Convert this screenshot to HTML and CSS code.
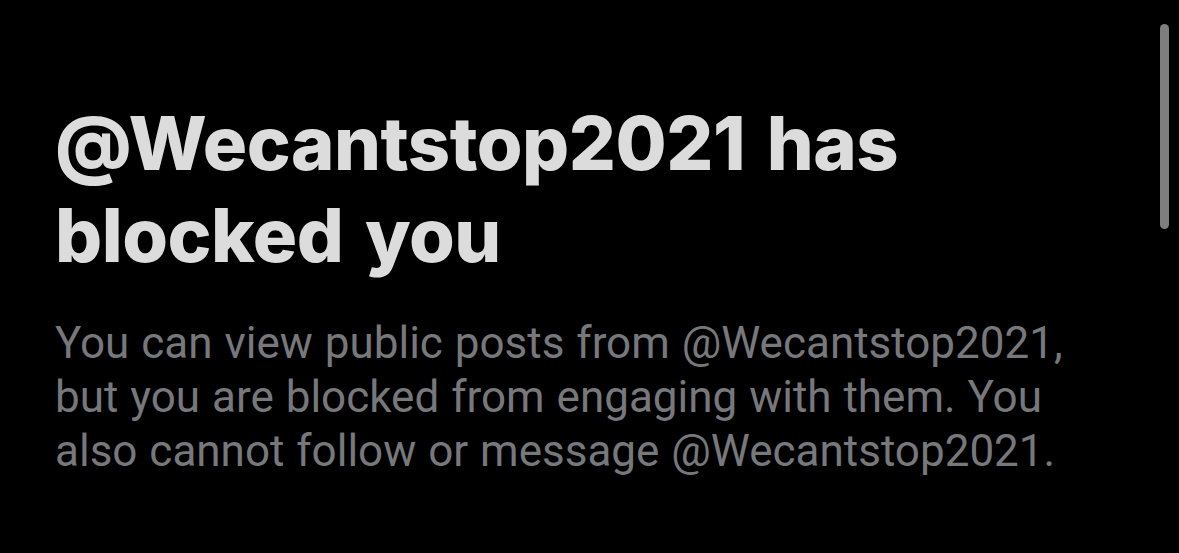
FILE: index.html
```html
<!DOCTYPE html>
<html>
<head>
<meta charset="utf-8">
<link rel="stylesheet" href="styles.css">
</head>
<body>
<div class="page">
  <main class="content">
    <h1 class="title">@Wecantstop2021 has blocked you</h1>
    <p class="desc">You can view public posts from @Wecantstop2021, but you are blocked from engaging with them. You also cannot follow or message @Wecantstop2021.</p>
  </main>
  <div class="scrollbar"></div>
</div>
</body>
</html>
```
FILE: styles.css
```css
html, body {
  margin: 0;
  padding: 0;
  background: #000;
}
.page {
  width: 1179px;
  height: 553px;
  overflow: hidden;
  position: relative;
  background: #000;
}
.content {
  padding: 97px 0 0 55px;
  width: 1020px;
}
.title {
  margin: 0;
  font-family: "Inter", "Liberation Sans", sans-serif;
  font-weight: 800;
  font-size: 74px;
  line-height: 92px;
  color: #dcdcdc;
  letter-spacing: -0.5px;
  word-spacing: 6px;
  width: 920px;
}
.desc {
  margin: 35px 0 0;
  font-family: "Roboto", "Liberation Sans", sans-serif;
  font-size: 44px;
  line-height: 54px;
  color: #77787c;
  word-spacing: 1px;
}
.scrollbar {
  position: absolute;
  top: 24px;
  left: 1160px;
  width: 9px;
  height: 205px;
  border-radius: 5px;
  background: #7e7e7e;
}
```
